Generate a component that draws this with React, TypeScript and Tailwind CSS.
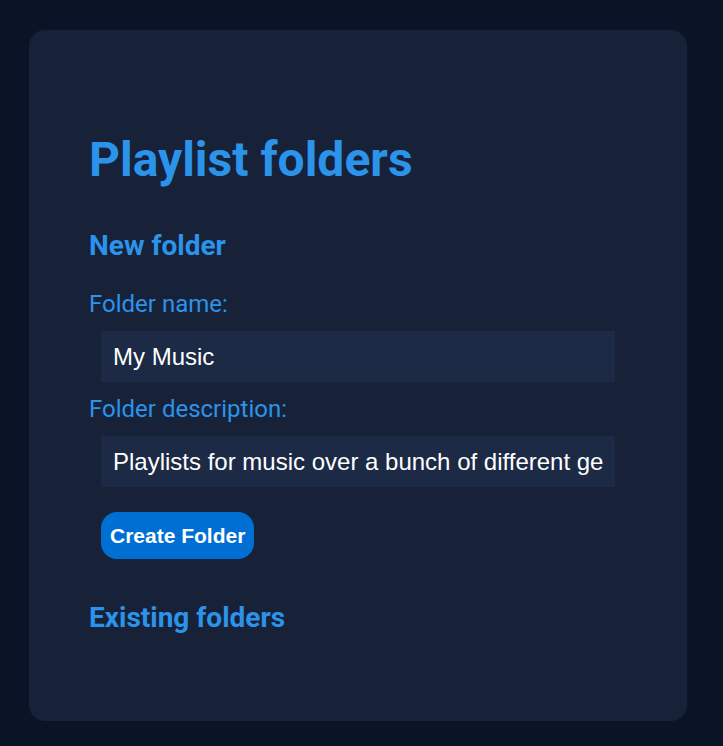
export default function App() {
  return (
    <div className="min-h-[746px] bg-[#0a1426] pt-[30px] pl-[29px] pb-[25px]">
      <div className="w-[658px] h-[691px] rounded-2xl bg-[#172239] px-[60px] pt-[102px] font-['Roboto',sans-serif]">
        <h1 className="text-[48px] font-bold leading-[56px] text-[#2b93ea]">Playlist folders</h1>
        <h2 className="mt-[41px] text-[28px] font-bold leading-[33px] text-[#2b93ea]">New folder</h2>
        <form className="mt-[27px] flex flex-col" onSubmit={(e) => e.preventDefault()}>
          <label className="text-[24px] leading-[30px] text-[#2b93ea]">Folder name:</label>
          <input
            className="m-3 h-[51px] bg-[#1c2a45] px-3 font-['Liberation_Sans',Arial,sans-serif] text-[24px] text-white outline-none"
            defaultValue="My Music"
          />
          <label className="text-[24px] leading-[30px] text-[#2b93ea]">Folder description:</label>
          <input
            className="m-3 h-[51px] bg-[#1c2a45] px-3 font-['Liberation_Sans',Arial,sans-serif] text-[24px] text-white outline-none"
            defaultValue="Playlists for music over a bunch of different genres"
          />
          <div>
            <button
              type="submit"
              className="mx-3 mt-[13px] mb-3 rounded-2xl bg-[#006fd3] px-[9px] py-3 font-['Liberation_Sans',Arial,sans-serif] text-[21px] font-bold leading-[23px] text-white"
            >
              Create Folder
            </button>
          </div>
        </form>
        <h2 className="mt-[30px] text-[28px] font-bold leading-[33px] text-[#2b93ea]">Existing folders</h2>
      </div>
    </div>
  );
}
